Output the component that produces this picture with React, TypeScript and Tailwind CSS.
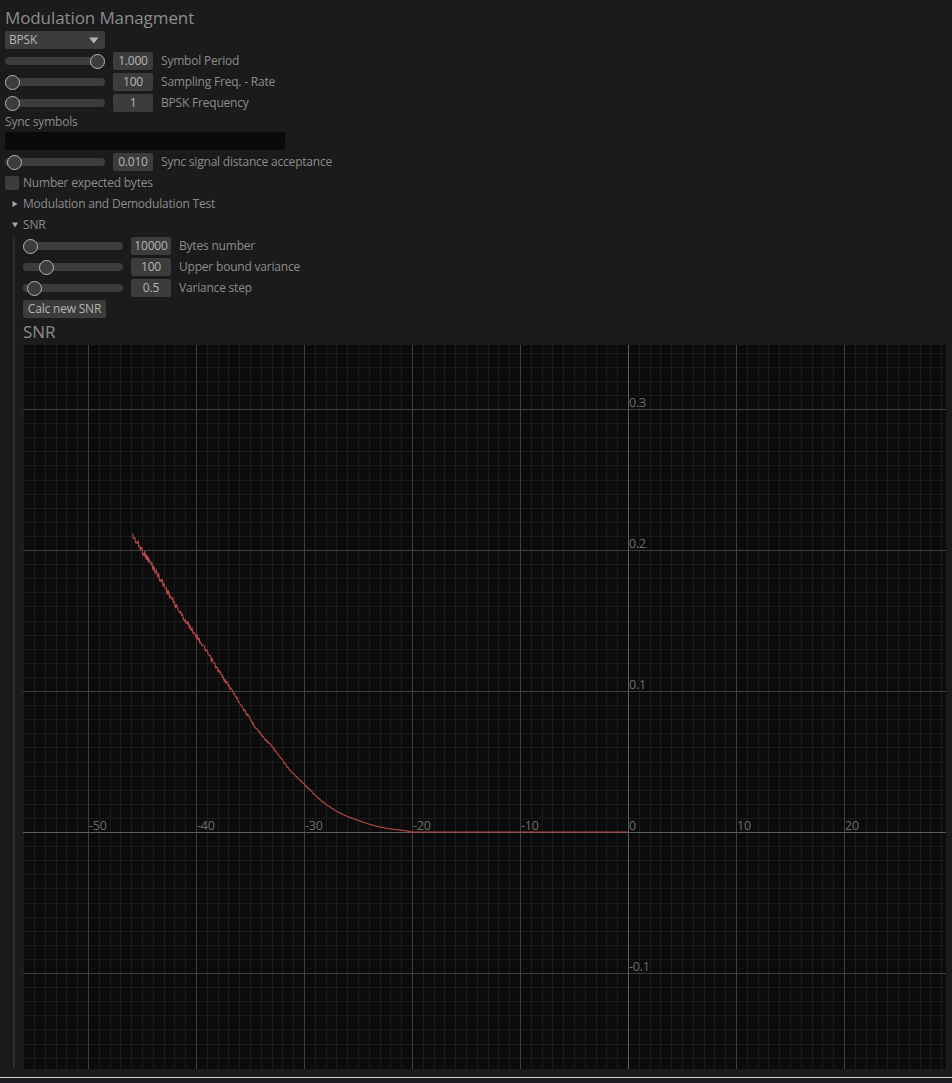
import React from "react";

const W = 923;
const H = 724;
const X0 = 605;
const Y0 = 487;
const SX = 10.8;
const SY = 1410;

const ctrl: [number, number][] = [
  [132.7, 536],
  [153, 567],
  [183, 617],
  [198, 638],
  [220, 673],
  [233, 692],
  [250, 719],
  [260, 733],
  [273, 748],
  [290, 770],
  [303, 783],
  [323, 802],
  [340, 813],
  [357, 820],
  [380, 827],
  [407, 831],
  [413, 832],
  [628, 832],
];

function frac(v: number) {
  return v - Math.floor(v);
}

// monotone cubic interpolation (Fritsch-Carlson)
function buildInterp() {
  const n = ctrl.length;
  const xs = ctrl.map((p) => p[0]);
  const ys = ctrl.map((p) => p[1]);
  const d: number[] = [];
  for (let i = 0; i < n - 1; i++) d.push((ys[i + 1] - ys[i]) / (xs[i + 1] - xs[i]));
  const m: number[] = [d[0]];
  for (let i = 1; i < n - 1; i++) {
    if (d[i - 1] * d[i] <= 0) m.push(0);
    else m.push((d[i - 1] + d[i]) / 2);
  }
  m.push(d[n - 2]);
  for (let i = 0; i < n - 1; i++) {
    if (d[i] === 0) {
      m[i] = 0;
      m[i + 1] = 0;
      continue;
    }
    const a = m[i] / d[i];
    const b = m[i + 1] / d[i];
    const s = a * a + b * b;
    if (s > 9) {
      const t = 3 / Math.sqrt(s);
      m[i] = t * a * d[i];
      m[i + 1] = t * b * d[i];
    }
  }
  return (x: number) => {
    let i = 0;
    while (i < n - 2 && x > xs[i + 1]) i++;
    const h = xs[i + 1] - xs[i];
    const t = Math.min(1, Math.max(0, (x - xs[i]) / h));
    const t2 = t * t;
    const t3 = t2 * t;
    return (
      (2 * t3 - 3 * t2 + 1) * ys[i] +
      (t3 - 2 * t2 + t) * h * m[i] +
      (-2 * t3 + 3 * t2) * ys[i + 1] +
      (t3 - t2) * h * m[i + 1]
    );
  };
}

function curvePath(): string {
  const f = buildInterp();
  const pts: string[] = [];
  let k = 0;
  for (let x = 132.7; x <= 628; x += 0.55) {
    let y = f(x);
    const amp = (832 - y) * 0.026;
    const r = frac(Math.sin(k * 12.9898 + 78.233) * 43758.5453) - 0.5;
    y += r * amp;
    k++;
    pts.push(`${(x - 23).toFixed(2)},${(y - 345).toFixed(2)}`);
  }
  return pts.join(" ");
}

function Plot() {
  const minor: React.ReactNode[] = [];
  const major: React.ReactNode[] = [];
  const axis: React.ReactNode[] = [];
  const labels: React.ReactNode[] = [];
  for (let i = -56; i <= 30; i++) {
    const px = X0 + i * SX;
    if (px < 0 || px > W) continue;
    const x = Math.round(px) + 0.5;
    const color = i === 0 ? "#5e5e5e" : i % 10 === 0 ? "#3f3f3f" : "#1b1b1b";
    const el = <line key={`v${i}`} x1={x} x2={x} y1={0} y2={H} stroke={color} strokeWidth={1} />;
    if (i === 0) axis.push(el);
    else if (i % 10 === 0) major.push(el);
    else minor.push(el);
    if (i % 10 === 0) {
      labels.push(
        <text key={`xl${i}`} x={x + 0.5} y={Y0 - 2.5} fill="#6e6e6e" fontSize={12.5}>
          {String(i)}
        </text>
      );
    }
  }
  for (let j = -17; j <= 35; j++) {
    const py = Y0 - j * 0.01 * SY;
    if (py < 0 || py > H) continue;
    const y = Math.round(py) + 0.5;
    const color = j === 0 ? "#5e5e5e" : j % 10 === 0 ? "#3f3f3f" : "#1b1b1b";
    const el = <line key={`h${j}`} x1={0} x2={W} y1={y} y2={y} stroke={color} strokeWidth={1} />;
    if (j === 0) axis.push(el);
    else if (j % 10 === 0) major.push(el);
    else minor.push(el);
    if (j % 10 === 0 && j !== 0) {
      labels.push(
        <text key={`yl${j}`} x={X0 + 1} y={y - 2.5} fill="#6e6e6e" fontSize={12.5}>
          {(j / 100).toFixed(1)}
        </text>
      );
    }
  }
  return (
    <svg width={W} height={H} className="block">
      <rect x={0} y={0} width={W} height={H} fill="#0b0b0b" />
      {minor}
      {major}
      {axis}
      {labels}
      <polyline
        points={curvePath()}
        fill="none"
        stroke="#bd4747"
        strokeWidth={1.1}
        strokeLinejoin="round"
      />
    </svg>
  );
}

function Slider({ handle, value, label }: { handle: number; value: string; label: string }) {
  return (
    <div className="flex h-[18px] items-center">
      <div className="relative h-[18px] w-[100px] shrink-0">
        <div className="absolute left-0 right-0 top-[5px] h-[8px] rounded-[4px] bg-[#3c3c3c]" />
        <div
          className="absolute top-[1.5px] h-[15px] w-[15px] rounded-full border border-[#b4b4b4] bg-[#3c3c3c]"
          style={{ left: handle - 7.5 }}
        />
      </div>
      <div className="ml-[8px] flex h-[18px] w-[40px] shrink-0 items-center justify-center rounded-[2px] bg-[#3c3c3c] text-[#b4b4b4]">
        {value}
      </div>
      <span className="ml-[8px] whitespace-nowrap text-[#8c8c8c]">{label}</span>
    </div>
  );
}

export default function App() {
  return (
    <div className="flex h-[1083px] w-[952px] flex-col overflow-hidden bg-[#1b1b1b] font-['Open_Sans','Noto_Sans',sans-serif] text-[12px] leading-[18px] tracking-[-0.2px] text-[#8c8c8c]">
      <div className="flex flex-col gap-[3px] pl-[5px] pt-[7px]">
        <div className="h-[21px] text-[17px] leading-[21px] tracking-[-0.1px] text-[#8c8c8c]">
          Modulation Managment
        </div>
        <div className="flex h-[18px] w-[100px] items-center justify-between rounded-[2px] bg-[#3c3c3c] pl-[4px] pr-[6px] text-[#b4b4b4]">
          <span>BPSK</span>
          <svg width="10" height="7" viewBox="0 0 10 7">
            <polygon points="0,0.5 9.5,0.5 4.75,6.5" fill="#b4b4b4" />
          </svg>
        </div>
        <Slider handle={92.5} value="1.000" label="Symbol Period" />
        <Slider handle={7.5} value="100" label="Sampling Freq. - Rate" />
        <Slider handle={7.5} value="1" label="BPSK Frequency" />
        <div className="h-[14px] leading-[14px]">Sync symbols</div>
        <div className="h-[18px] w-[280px] rounded-[2px] bg-[#0a0a0a]" />
        <Slider handle={9.5} value="0.010" label="Sync signal distance acceptance" />
        <div className="flex h-[18px] items-center">
          <div className="h-[14px] w-[14px] rounded-[2px] bg-[#3c3c3c]" />
          <span className="ml-[4px]">Number expected bytes</span>
        </div>
        <div className="flex h-[18px] items-center">
          <div className="flex w-[18px] justify-center pl-[2px]">
            <svg width="6" height="6" viewBox="0 0 6 6">
              <polygon points="0.5,0 5.5,3 0.5,6" fill="#a8a8a8" />
            </svg>
          </div>
          <span>Modulation and Demodulation Test</span>
        </div>
        <div className="flex h-[18px] items-center">
          <div className="flex w-[18px] justify-center pl-[2px]">
            <svg width="6" height="6" viewBox="0 0 6 6">
              <polygon points="0,0.5 6,0.5 3,5.5" fill="#a8a8a8" />
            </svg>
          </div>
          <span>SNR</span>
        </div>
        <div className="flex">
          <div className="ml-[8px] mb-[1px] w-[2px] bg-[#2c2c2c]" />
          <div className="ml-[8px] flex w-[923px] flex-col gap-[3px]">
            <Slider handle={7.5} value="10000" label="Bytes number" />
            <Slider handle={23.7} value="100" label="Upper bound variance" />
            <Slider handle={11.3} value="0.5" label="Variance step" />
            <div className="flex h-[18px] w-[83px] items-center justify-center rounded-[2px] bg-[#3c3c3c] text-[#b4b4b4]">
              Calc new SNR
            </div>
            <div className="h-[21px] text-[17px] leading-[21px] tracking-[-0.1px]">SNR</div>
            <Plot />
          </div>
        </div>
      </div>
      <div className="flex-1" />
      <div className="h-[1px] bg-[#d0d0d0]" />
      <div className="h-[5px] bg-[#1d1c22]" />
    </div>
  );
}
